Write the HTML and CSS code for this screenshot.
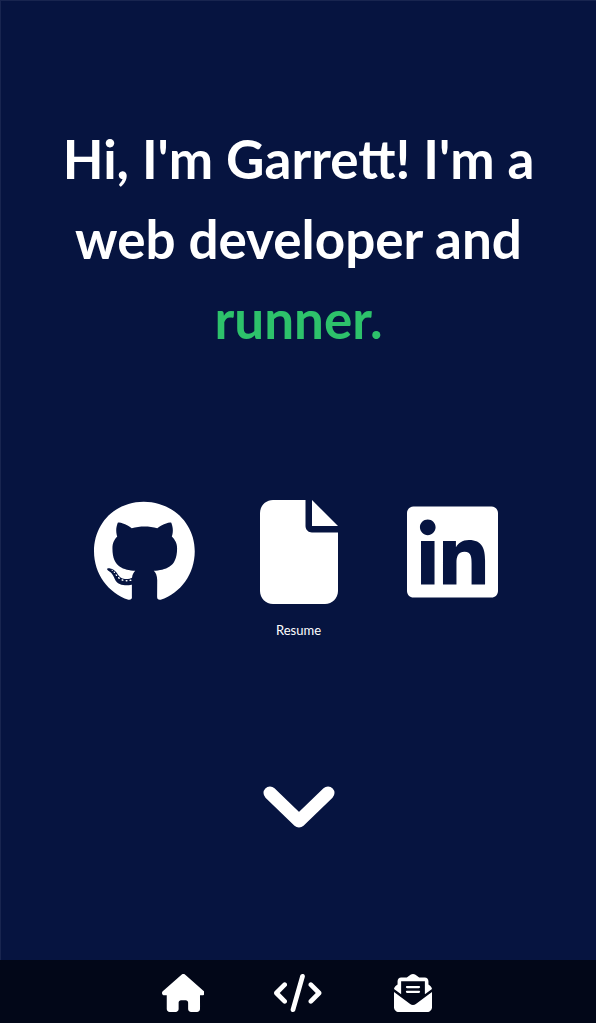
FILE: index.html
```html
<!DOCTYPE html>
<html lang="en">
<head>
<meta charset="utf-8">
<meta name="viewport" content="width=device-width, initial-scale=1">
<title>Garrett | Web Developer</title>
<link rel="stylesheet" href="styles.css">
</head>
<body class="page">
<main class="hero">
  <h1 class="intro">Hi, I'm Garrett! I'm a web developer and <span class="accent">runner.</span></h1>
  <div class="links">
    <a class="link" href="#github" aria-label="GitHub">
      <svg class="link-icon" viewBox="0 0 496 512" aria-hidden="true"><path d="M165.900 397.400c0 2-2.300 3.600-5.200 3.600-3.300.3-5.600-1.300-5.600-3.600 0-2 2.300-3.600 5.200-3.600 3-.3 5.600 1.300 5.600 3.600zm-31.100-4.500c-.7 2 1.300 4.300 4.300 4.900 2.600 1 5.600 0 6.200-2s-1.300-4.300-4.300-5.200c-2.600-.7-5.500.3-6.200 2.300zm44.200-1.700c-2.900.7-4.900 2.600-4.600 4.900.3 2 2.900 3.300 5.900 2.600 2.900-.7 4.900-2.600 4.600-4.600-.3-1.900-3-3.200-5.900-2.900zM244.800 8C106.100 8 0 113.300 0 252c0 110.900 69.800 205.800 169.500 239.200 12.800 2.300 17.300-5.600 17.300-12.100 0-6.200-.3-40.400-.3-61.400 0 0-70 15-84.700-29.800 0 0-11.400-29.100-27.800-36.600 0 0-22.900-15.700 1.600-15.400 0 0 24.900 2 38.600 25.800 21.900 38.600 58.600 27.500 72.900 20.900 2.300-16 8.800-27.100 16-33.700-55.900-6.200-112.300-14.300-112.300-110.500 0-27.500 7.600-41.300 23.600-58.900-2.600-6.500-11.100-33.300 2.600-67.900 20.900-6.500 69 27 69 27 20-5.600 41.500-8.500 62.800-8.500s42.800 2.900 62.800 8.500c0 0 48.100-33.600 69-27 13.700 34.700 5.200 61.400 2.600 67.900 16 17.700 25.800 31.500 25.800 58.900 0 96.500-58.900 104.200-114.800 110.500 9.200 7.900 17 22.900 17 46.400 0 33.700-.3 75.400-.3 83.600 0 6.500 4.600 14.400 17.300 12.100C428.200 457.800 496 362.900 496 252 496 113.300 383.500 8 244.800 8zM97.200 352.900c-1.300 1-1 3.300.7 5.200 1.600 1.600 3.900 2.300 5.200 1 1.300-1 1-3.300-.7-5.200-1.600-1.600-3.900-2.300-5.200-1zm-10.800-8.100c-.7 1.300.3 2.900 2.300 3.900 1.600 1 3.600.7 4.300-.7.7-1.300-.3-2.900-2.300-3.900-2-.6-3.600-.3-4.300.7zm32.400 35.600c-1.600 1.300-1 4.300 1.300 6.200 2.300 2.300 5.200 2.600 6.500 1 1.300-1.300.7-4.300-1.300-6.200-2.200-2.300-5.200-2.600-6.500-1zm-11.400-14.700c-1.600 1-1.600 3.600 0 5.900 1.600 2.300 4.300 3.300 5.600 2.300 1.600-1.300 1.600-3.900 0-6.200-1.400-2.300-4-3.300-5.600-2z"/></svg>
    </a>
    <a class="link" href="#resume">
      <svg class="link-icon" viewBox="0 0 384 512" aria-hidden="true"><path d="M0 64C0 28.700 28.700 0 64 0H224V128c0 17.700 14.300 32 32 32H384V448c0 35.300-28.700 64-64 64H64c-35.300 0-64-28.700-64-64V64zm384 64H256V0L384 128z"/></svg>
      <span class="link-label">Resume</span>
    </a>
    <a class="link" href="#linkedin" aria-label="LinkedIn">
      <svg class="link-icon" viewBox="0 0 448 512" aria-hidden="true"><path d="M416 32H31.900C14.300 32 0 46.500 0 64.300v383.400C0 465.500 14.300 480 31.900 480H416c17.600 0 32-14.500 32-32.300V64.300c0-17.800-14.400-32.300-32-32.300zM135.400 416H69V202.200h66.500V416zm-33.200-243c-21.300 0-38.500-17.300-38.500-38.500S80.900 96 102.200 96c21.200 0 38.500 17.300 38.500 38.500 0 21.300-17.200 38.500-38.500 38.500zm282.100 243h-66.400V312c0-24.800-.5-56.700-34.500-56.700-34.600 0-39.900 27-39.900 54.900V416h-66.400V202.200h63.700v29.200h.9c8.900-16.800 30.600-34.500 62.900-34.500 67.200 0 79.700 44.300 79.700 101.900V416z"/></svg>
    </a>
  </div>
  <a class="more" href="#projects" aria-label="Scroll down">
    <svg class="more-icon" viewBox="0 0 72 84" aria-hidden="true"><path d="M7 33L36 61L65 33"/></svg>
  </a>
</main>
<nav class="bar" aria-label="Main">
  <div class="bar-items">
    <a class="bar-link" href="#home" aria-label="Home">
      <svg class="bar-icon" viewBox="0 0 576 512" aria-hidden="true"><path d="M575.800 255.500c0 18-15 32.100-32 32.100h-32l.7 160.200c0 2.700-.2 5.400-.5 8.100V472c0 22.100-17.900 40-40 40H392c-22.100 0-40-17.900-40-40V384c0-17.700-14.300-32-32-32H256c-17.700 0-32 14.300-32 32v88c0 22.100-17.900 40-40 40H104c-22.100 0-40-17.900-40-40V287.600H32c-18 0-32-14-32-32.100c0-9 3-17 10-24L266.400 8c7-7 15-8 22-8s15 2 21 7L564.800 231.500c8 7 12 15 11 24z"/></svg>
    </a>
    <a class="bar-link" href="#projects" aria-label="Projects">
      <svg class="bar-icon" viewBox="0 0 640 512" aria-hidden="true"><path d="M392.800 1.200c-17-4.900-34.700 5-39.600 22l-128 448c-4.900 17 5 34.700 22 39.600s34.700-5 39.600-22l128-448c4.900-17-5-34.700-22-39.600zm80.600 120.100c-12.500 12.500-12.500 32.800 0 45.300L562.700 256l-89.400 89.400c-12.500 12.500-12.500 32.800 0 45.300s32.800 12.500 45.300 0l112-112c12.500-12.500 12.500-32.800 0-45.300l-112-112c-12.500-12.500-32.800-12.500-45.300 0zm-306.700 0c-12.500-12.500-32.800-12.500-45.300 0l-112 112c-12.500 12.500-12.500 32.800 0 45.300l112 112c12.500 12.500 32.800 12.500 45.300 0s12.500-32.800 0-45.300L77.300 256l89.400-89.400c12.500-12.500 12.500-32.800 0-45.300z"/></svg>
    </a>
    <a class="bar-link" href="#contact" aria-label="Contact">
      <svg class="bar-icon" viewBox="0 0 512 512" aria-hidden="true"><path d="M96 96v177.400L.2 202.500c1.600-18.100 10.900-34.900 25.700-45.800L48 140.300V96c0-26.500 21.500-48 48-48h76.600l49.900-36.900C232.200 3.900 243.900 0 256 0s23.800 3.900 33.500 11L339.400 48H416c26.500 0 48 21.500 48 48v44.300l22.100 16.400c14.800 10.900 24.100 27.700 25.700 45.800L416 273.400V96zM0 448V242.100L217.600 403.300c11.100 8.200 24.600 12.700 38.400 12.700s27.300-4.400 38.400-12.700L512 242.100V448c0 35.300-28.700 64-64 64H64c-35.300 0-64-28.700-64-64zM176 160H336c8.800 0 16 7.200 16 16s-7.200 16-16 16H176c-8.800 0-16-7.200-16-16s7.200-16 16-16zm0 64H336c8.800 0 16 7.200 16 16s-7.200 16-16 16H176c-8.800 0-16-7.200-16-16s7.200-16 16-16z"/></svg>
    </a>
  </div>
</nav>
</body>
</html>
```
FILE: styles.css
```css
* {
  box-sizing: border-box;
}

.page {
  margin: 0;
  min-height: 100vh;
  display: flex;
  flex-direction: column;
  background: #061440;
  color: #fff;
  font-family: Lato, sans-serif;
}

.hero {
  flex: 1;
  display: flex;
  flex-direction: column;
  align-items: center;
  padding: 118px 48px 80px;
  border-top: 1px solid #18254f;
  border-left: 1px solid #18254f;
}

.intro {
  margin: 0;
  max-width: 500px;
  font-size: 53px;
  line-height: 80px;
  font-weight: 700;
  text-align: center;
}

.accent {
  color: #2dc26b;
}

.links {
  width: 100%;
  max-width: 462px;
  margin-top: 141px;
  display: grid;
  grid-template-columns: repeat(3, 1fr);
}

.link {
  display: flex;
  flex-direction: column;
  align-items: center;
  gap: 18px;
  color: inherit;
  text-decoration: none;
}

.link-icon {
  height: 104px;
  fill: currentColor;
}

.link-label {
  font-size: 13px;
  line-height: 16px;
}

.more {
  display: flex;
  margin-top: 122px;
  color: inherit;
}

.more-icon {
  height: 84px;
  fill: none;
  stroke: currentColor;
  stroke-width: 13;
  stroke-linecap: round;
  stroke-linejoin: round;
}

.bar {
  display: flex;
  justify-content: center;
  padding: 14px 16px 11px;
  background: #020718;
}

.bar-items {
  width: 100%;
  max-width: 345px;
  display: grid;
  grid-template-columns: repeat(3, 1fr);
}

.bar-link {
  display: flex;
  justify-content: center;
  color: inherit;
}

.bar-icon {
  height: 38px;
  fill: currentColor;
}
```
